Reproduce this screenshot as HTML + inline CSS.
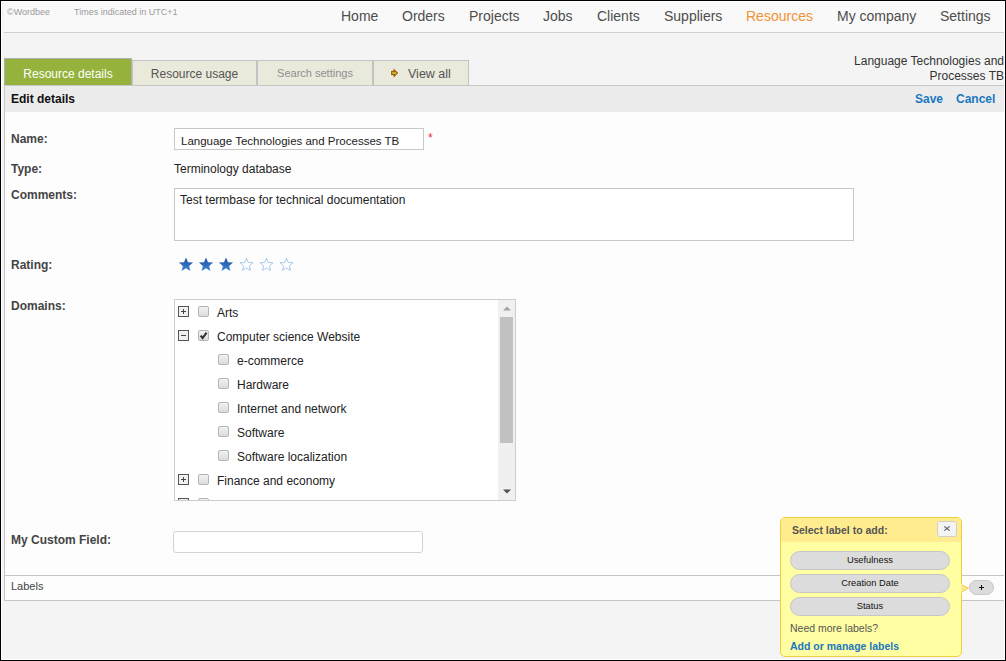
<!DOCTYPE html>
<html><head><meta charset="utf-8">
<style>
*{box-sizing:border-box;margin:0;padding:0}
html,body{width:1006px;height:661px;overflow:hidden}
body{font-family:"Liberation Sans",sans-serif;background:#000;position:relative}
.a{position:absolute;white-space:nowrap}
.small{font-size:9px;color:#999;line-height:11px}
.nav{font-size:14px;color:#4d4d4d;line-height:16px;top:8px}
.tab{position:absolute;top:60px;height:25px;border:1px solid #c3c3c3;border-bottom:none;background:#e9e9dc;font-size:12px;color:#555;text-align:center;line-height:14px;padding-top:6px}
.lbl{position:absolute;font-weight:bold;font-size:12px;color:#444;left:11px;line-height:14px}
.cb{position:absolute;width:11px;height:11px;border:1px solid #b5b5b5;border-radius:2px;background:linear-gradient(#f2f2f2,#dcdcdc)}
.ex{position:absolute;width:11px;height:11px;border:1px solid #555;background:#f0f0f0}
.ex:before{content:"";position:absolute;left:2px;top:4px;width:5px;height:1px;background:#444}
.ex.p:after{content:"";position:absolute;left:4px;top:2px;width:1px;height:5px;background:#444}
.tt{position:absolute;font-size:12px;color:#222;line-height:14px}
.pill{position:absolute;left:790px;width:160px;height:19px;border:1px solid #c6c6c6;border-radius:10px;background:#dcdcdc;font-size:9.3px;color:#111;text-align:center;line-height:16.5px}
</style></head><body>
<!-- frame -->
<div class="a" style="left:1px;top:1px;width:1004px;height:659px;background:#fff"></div>
<div class="a" style="left:2px;top:2px;width:1002px;height:657px;background:#f4f4f4"></div>
<!-- header -->
<div class="a" style="left:4px;top:2px;width:1000px;height:30px;background:#f9f9f9"></div>
<div class="a" style="left:4px;top:32px;width:1000px;height:1px;background:#cfcfcf"></div>
<div class="a small" style="left:7px;top:7px">©Wordbee</div>
<div class="a small" style="left:74px;top:7px">Times indicated in UTC+1</div>
<div class="a nav" style="left:341px">Home</div>
<div class="a nav" style="left:402px">Orders</div>
<div class="a nav" style="left:469px">Projects</div>
<div class="a nav" style="left:543px">Jobs</div>
<div class="a nav" style="left:597px">Clients</div>
<div class="a nav" style="left:664px">Suppliers</div>
<div class="a nav" style="left:746px;color:#f39233">Resources</div>
<div class="a nav" style="left:837px">My company</div>
<div class="a nav" style="left:940px">Settings</div>

<div class="a" style="right:2px;top:54px;font-size:12px;color:#333;text-align:right;line-height:15px">Language Technologies and<br>Processes TB</div>

<!-- content panel -->
<div class="a" style="left:4px;top:85px;width:1000px;height:516px;border:1px solid #c6c6c6;border-right:none;background:#fdfdfd"></div>
<div class="a" style="left:5px;top:86px;width:999px;height:26px;background:#ececec"></div>
<div class="a" style="left:11px;top:92px;font-size:12px;font-weight:bold;color:#111;line-height:14px">Edit details</div>
<div class="a" style="left:915px;top:92px;font-size:12px;font-weight:bold;color:#1a78c0;line-height:14px">Save</div>
<div class="a" style="left:956px;top:92px;font-size:12px;font-weight:bold;color:#1a78c0;line-height:14px">Cancel</div>

<!-- tabs -->
<div class="tab" style="left:4px;top:58px;width:128px;height:27px;background:#94b23c;color:#fff;border-color:#b0b0b0;padding-top:8px">Resource details</div>
<div class="tab" style="left:132px;width:125px">Resource usage</div>
<div class="tab" style="left:257px;width:116px;color:#8f8f8f;font-size:11px;padding-top:5px">Search settings</div>
<div class="tab" style="left:373px;width:96px;text-align:left;padding-left:34px;font-size:12.5px">View all</div>
<svg class="a" style="left:389px;top:67px" width="12" height="12" viewBox="0 0 12 12"><polygon points="2.6,4.4 5.1,4.4 5.1,2.6 8.6,6 5.1,9.4 5.1,7.6 2.6,7.6" fill="#fff" stroke="#fff" stroke-width="2.6" stroke-linejoin="round" opacity="0.85"/><polygon points="2.6,4.4 5.1,4.4 5.1,2.6 8.6,6 5.1,9.4 5.1,7.6 2.6,7.6" fill="#c6b62e" stroke="#a05800" stroke-width="1.1"/></svg>

<!-- form -->
<div class="lbl" style="top:132px">Name:</div>
<div class="a" style="left:174px;top:128px;width:250px;height:22px;border:1px solid #c8c8c8;background:#fff"></div>
<div class="tt" style="left:181px;top:134px;font-size:11.5px">Language Technologies and Processes TB</div>
<div class="a" style="left:428px;top:132px;font-size:12px;color:#e8303a;line-height:12px">*</div>

<div class="lbl" style="top:162px">Type:</div>
<div class="tt" style="left:174px;top:162px">Terminology database</div>

<div class="lbl" style="top:188px">Comments:</div>
<div class="a" style="left:174px;top:188px;width:680px;height:53px;border:1px solid #c8c8c8;background:#fff"></div>
<div class="tt" style="left:180px;top:193px">Test termbase for technical documentation</div>

<div class="lbl" style="top:258px">Rating:</div>
<svg class="a" style="left:178px;top:257px" width="120" height="16" viewBox="0 0 120 16"><defs><linearGradient id="sg" x1="0" y1="0" x2="0" y2="1"><stop offset="0" stop-color="#1d4c9c"/><stop offset="1" stop-color="#3f88d4"/></linearGradient></defs><polygon transform="translate(0.5,0)" points="7.50,0.40 9.44,5.23 14.63,5.58 10.64,8.92 11.91,13.97 7.50,11.20 3.09,13.97 4.36,8.92 0.37,5.58 5.56,5.23" fill="url(#sg)"/><polygon transform="translate(20.5,0)" points="7.50,0.40 9.44,5.23 14.63,5.58 10.64,8.92 11.91,13.97 7.50,11.20 3.09,13.97 4.36,8.92 0.37,5.58 5.56,5.23" fill="url(#sg)"/><polygon transform="translate(40.5,0)" points="7.50,0.40 9.44,5.23 14.63,5.58 10.64,8.92 11.91,13.97 7.50,11.20 3.09,13.97 4.36,8.92 0.37,5.58 5.56,5.23" fill="url(#sg)"/><polygon transform="translate(61.0,0)" points="7.50,1.00 9.26,5.47 14.06,5.77 10.35,8.83 11.56,13.48 7.50,10.90 3.44,13.48 4.65,8.83 0.94,5.77 5.74,5.47" fill="#fff" stroke="#94bce6" stroke-width="0.8"/><polygon transform="translate(81.0,0)" points="7.50,1.00 9.26,5.47 14.06,5.77 10.35,8.83 11.56,13.48 7.50,10.90 3.44,13.48 4.65,8.83 0.94,5.77 5.74,5.47" fill="#fff" stroke="#94bce6" stroke-width="0.8"/><polygon transform="translate(101.0,0)" points="7.50,1.00 9.26,5.47 14.06,5.77 10.35,8.83 11.56,13.48 7.50,10.90 3.44,13.48 4.65,8.83 0.94,5.77 5.74,5.47" fill="#fff" stroke="#94bce6" stroke-width="0.8"/></svg>

<div class="lbl" style="top:299px">Domains:</div>
<div class="a" style="left:174px;top:299px;width:342px;height:202px;border:1px solid #cdcdcd;background:#fff;overflow:hidden"><div class="ex p" style="left:3px;top:6px"></div><div class="cb" style="left:23px;top:6px"></div><div class="tt" style="left:42px;top:6px">Arts</div><div class="ex" style="left:3px;top:30px"></div><div class="cb" style="left:23px;top:30px"><svg width="9" height="9" viewBox="0 0 9 9" style="position:absolute;left:0;top:0"><path d="M1.6 4.6 L3.6 7 L7.6 1.6" stroke="#333" stroke-width="2.1" fill="none"/></svg></div><div class="tt" style="left:42px;top:30px">Computer science Website</div><div class="cb" style="left:43px;top:54px"></div><div class="tt" style="left:62px;top:54px">e-commerce</div><div class="cb" style="left:43px;top:78px"></div><div class="tt" style="left:62px;top:78px">Hardware</div><div class="cb" style="left:43px;top:102px"></div><div class="tt" style="left:62px;top:102px">Internet and network</div><div class="cb" style="left:43px;top:126px"></div><div class="tt" style="left:62px;top:126px">Software</div><div class="cb" style="left:43px;top:150px"></div><div class="tt" style="left:62px;top:150px">Software localization</div><div class="ex p" style="left:3px;top:174px"></div><div class="cb" style="left:23px;top:174px"></div><div class="tt" style="left:42px;top:174px">Finance and economy</div><div class="ex p" style="left:3px;top:198px"></div><div class="cb" style="left:23px;top:198px"></div><div class="a" style="left:323px;top:0;width:17px;height:200px;background:#f0f0f0"></div><div class="a" style="left:325px;top:17px;width:13px;height:126px;background:#c1c1c1"></div><svg class="a" style="left:327.5px;top:6px" width="8" height="5"><polygon points="0,4.5 4,0.5 8,4.5" fill="#a3a3a3"/></svg><svg class="a" style="left:328px;top:189px" width="8" height="5"><polygon points="0,0.5 4,4.5 8,0.5" fill="#505050"/></svg>
</div>

<div class="lbl" style="top:533px">My Custom Field:</div>
<div class="a" style="left:173px;top:531px;width:250px;height:22px;border:1px solid #d3d3d3;border-radius:3px;background:#fff"></div>

<!-- labels bar -->
<div class="a" style="left:5px;top:575px;width:999px;height:1px;background:#c6c6c6"></div>
<div class="a" style="left:11px;top:580px;font-size:11px;color:#444;line-height:13px">Labels</div>


<!-- add label button + popup -->
<div class="a" style="left:969px;top:580px;width:25px;height:15px;border:1px solid #c6c6c6;border-radius:8px;background:#dcdcdc"></div>
<div class="a" style="left:979px;top:587px;width:5px;height:1px;background:#111"></div>
<div class="a" style="left:981px;top:585px;width:1px;height:5px;background:#111"></div>
<div class="a" style="left:780px;top:517px;width:182px;height:140px;border:1px solid #f0cf3c;border-radius:5px;background:#fffea2;overflow:hidden">
  <div class="a" style="left:0;top:0;width:180px;height:24px;background:#ffec8e"></div>
  <div class="a" style="left:11px;top:6px;font-size:10.5px;font-weight:bold;color:#555;line-height:13px">Select label to add:</div>
  <div class="a" style="left:156px;top:3px;width:20px;height:16px;border:1px solid #cfcfcf;border-radius:3px;background:#f4f4f4"><svg width="18" height="14" style="position:absolute;left:0;top:0"><path d="M6.3 4.4 L11.7 8.6 M11.7 4.4 L6.3 8.6" stroke="#5a5a6a" stroke-width="1.15"/></svg></div>
  <div class="a" style="left:9px;top:104px;font-size:10.5px;color:#555;line-height:13px">Need more labels?</div>
  <div class="a" style="left:9px;top:122px;font-size:10.5px;font-weight:bold;color:#1a78c0;line-height:13px">Add or manage labels</div>
</div>
<svg class="a" style="left:961px;top:584px" width="8" height="9"><polygon points="0,0.5 7.5,4 0,8.5" fill="#ffe992" stroke="#f0cf3c" stroke-width="1"/><rect x="0" y="0" width="1" height="9" fill="#ffe992"/></svg>
<div class="pill" style="top:551px">Usefulness</div>
<div class="pill" style="top:574px">Creation Date</div>
<div class="pill" style="top:597px">Status</div>
</body></html>
